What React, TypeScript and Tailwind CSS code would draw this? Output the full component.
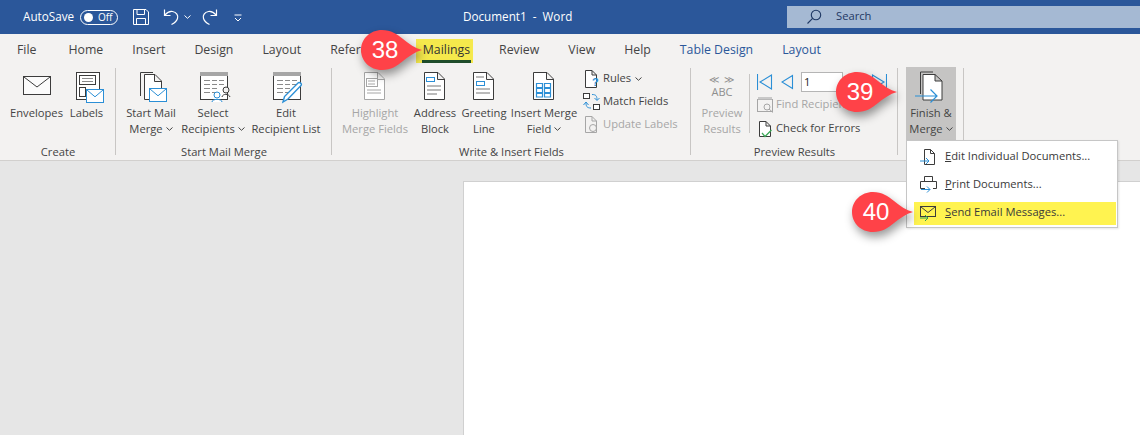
import React from "react";

const ink = "#3c3c3c";
const blue = "#2b8fd6";
const gray = "#a6a6a6";

function Callout({ n, className }: { n: number; className: string }) {
  return (
    <div className={`absolute w-[63px] h-[42px] ${className}`}>
      <svg width="63" height="42" viewBox="0 0 63 42" className="absolute inset-0 drop-shadow-[2px_5px_5px_rgba(0,0,0,0.4)]">
        <path d="M22 1 C31 1 37 5 43 10 C49 15 55 19 62 21 C55 23 49 27 43 32 C37 37 31 41 22 41 C10 41 1 32 1 21 C1 10 10 1 22 1 Z" fill="#ff4248" />
      </svg>
      <span className="absolute left-[3px] top-0 w-[44px] h-[42px] flex items-center justify-center text-white text-[24px] font-['Liberation_Sans',sans-serif]">
        {n}
      </span>
    </div>
  );
}

function Tab({ children, active, blueText, className = "" }: { children: React.ReactNode; active?: boolean; blueText?: boolean; className?: string }) {
  if (active) {
    return (
      <div className="relative h-[24px] flex items-center bg-[#f5e94c] -ml-[7px] pl-[7px] -mr-[3px] pr-[3px] text-[#333333]">
        {children}
        <div className="absolute left-[6px] right-[2px] bottom-0 h-[3px] bg-[#1f4d2b]" />
      </div>
    );
  }
  return <div className={`${blueText ? "text-[#2b579a]" : "text-[#444444]"} ${className}`}>{children}</div>;
}

function BigButton({ w, icon, line1, line2, caret, disabled }: { w: string; icon: React.ReactNode; line1: string; line2?: string; caret?: boolean; disabled?: boolean }) {
  return (
    <div className={`${w} flex flex-col items-center leading-[15px] ${disabled ? "text-[#a6a6a6]" : "text-[#444444]"}`}>
      <div className="h-[38px] pt-[2px]">{icon}</div>
      <div className="whitespace-nowrap">{line1}</div>
      {line2 && (
        <div className="whitespace-nowrap flex items-center mt-px">
          {line2}
          {caret && <Caret />}
        </div>
      )}
    </div>
  );
}

function Caret() {
  return (
    <svg width="7" height="4" viewBox="0 0 7 4" className="ml-[3px] mt-[1px]">
      <path d="M0.5 0.5 L3.5 3.3 L6.5 0.5" fill="none" stroke="#444444" />
    </svg>
  );
}

function Group({ w, label, pl, children }: { w: string; label: string; pl: string; children: React.ReactNode }) {
  return (
    <div className={`${w} ${pl} relative flex flex-col shrink-0`}>
      <div className="flex h-[78px] pt-px">{children}</div>
      <div className="absolute left-0 right-0 top-[78px] text-center leading-[15px] text-[#444444]">{label}</div>
      <div className="absolute right-0 top-[2px] h-[87px] w-px bg-[#c8c6c4]" />
    </div>
  );
}

function Ic({ children, s = 36 }: { children: React.ReactNode; s?: number }) {
  return (
    <svg width={s} height={s} viewBox={`0 0 ${s} ${s}`} fill="none" className="shrink-0">
      {children}
    </svg>
  );
}

function Page({ x, color = ink, y = 3, w = 21, h = 28 }: { x: number; color?: string; y?: number; w?: number; h?: number }) {
  return (
    <path
      d={`M${x + 0.5} ${y + 0.5} H${x + w - 7} L${x + w - 0.5} ${y + 7} V${y + h - 0.5} H${x + 0.5} Z M${x + w - 7.5} ${y + 1} V${y + 7.5} H${x + w - 1}`}
      fill="#ffffff"
      stroke={color}
    />
  );
}

function MiniEnv({ x, y, w = 17, h = 13, color = blue }: { x: number; y: number; w?: number; h?: number; color?: string }) {
  return (
    <g>
      <rect x={x + 0.5} y={y + 0.5} width={w} height={h} fill="#ffffff" stroke={color} />
      <path d={`M${x + 1} ${y + 1} L${x + w / 2 + 0.5} ${y + h * 0.6} L${x + w} ${y + 1}`} stroke={color} />
    </g>
  );
}

function TableIc() {
  return (
    <g>
      <rect x="5.5" y="3.5" width="27" height="27" fill="#ffffff" stroke={ink} />
      <rect x="5" y="3" width="28" height="4" fill="#a6a6a6" />
      <path d="M9 11.5H15M17 11.5H22M24 11.5H29M9 15.5H15M17 15.5H22M24 15.5H29M9 19.5H15M17 19.5H22M9 23.5H15M17 23.5H22" stroke="#8a8a8a" />
    </g>
  );
}

function SmallRow({ icon, text, disabled, caret, className = "" }: { icon: React.ReactNode; text: string; disabled?: boolean; caret?: boolean; className?: string }) {
  return (
    <div className={`h-[23px] flex items-center gap-[1px] whitespace-nowrap ${disabled ? "text-[#a6a6a6]" : "text-[#444444]"} ${className}`}>
      {icon}
      {text}
      {caret && <Caret />}
    </div>
  );
}

function MenuRow({ icon, first, rest, active }: { icon: React.ReactNode; first: string; rest: string; active?: boolean }) {
  return (
    <div className={`h-[23px] flex items-center pl-[6px] mt-[5px] text-[#3a3a3a] ${active ? "bg-[#fff350]" : ""}`}>
      <div className="w-[25px] shrink-0 -mt-[2px]">{icon}</div>
      <span className="pb-[3px]"><span className="underline">{first}</span>{rest}</span>
    </div>
  );
}

export default function App() {
  return (
    <div className="relative w-[1140px] h-[435px] overflow-hidden flex flex-col bg-[#e6e6e6] font-['Open_Sans',sans-serif] text-[11.2px]">
      {/* title bar */}
      <div className="h-[34px] shrink-0 bg-[#2b579a] flex items-center text-white">
        <span className="ml-[23px] w-[50px] text-[11.7px]">AutoSave</span>
        <div className="ml-[7px] w-[38px] h-[15px] rounded-full border border-white flex items-center pl-[3px] gap-[5px]">
          <div className="w-[9px] h-[9px] rounded-full bg-white" />
          <span className="text-[10px] leading-none">Off</span>
        </div>
        <svg width="18" height="18" viewBox="0 0 18 18" fill="none" stroke="#fff" className="ml-[14px]">
          <path d="M1.5 1.5H14L16.5 4V16.5H1.5Z M5 1.5V6.5H12.5V1.5 M4.5 16.5V10.5H13.5V16.5" />
        </svg>
        <svg width="18" height="18" viewBox="0 0 18 18" fill="none" stroke="#fff" strokeWidth="1.2" className="ml-[13px]">
          <path d="M1.5 1.5V7.5H7.5 M1.8 7.2C4 4.5 6.5 3 9.5 3.5C13.5 4.2 15.5 7.5 14.5 10.5C13.8 13 11.5 15 8.5 16.5" />
        </svg>
        <svg width="7" height="4" viewBox="0 0 7 4" fill="none" stroke="#fff" className="ml-[3px]">
          <path d="M0.5 0.5L3.5 3.3L6.5 0.5" />
        </svg>
        <svg width="18" height="18" viewBox="0 0 18 18" fill="none" stroke="#fff" strokeWidth="1.2" className="ml-[9px]">
          <path d="M16.5 1.5V7.5H10.5 M16.2 7.2C14 4.5 11.5 3 8.5 3.5C4.5 4.2 2.5 7.5 3.5 10.5C4.2 13 6.5 15 9.5 16.5" />
        </svg>
        <svg width="8" height="8" viewBox="0 0 8 8" fill="none" stroke="#fff" className="ml-[16px] mt-[1px]">
          <path d="M0.5 1H7.5 M1 4L4 7L7 4" />
        </svg>
        <span className="ml-[221px] text-[11.7px] whitespace-pre">Document1  -  Word</span>
        <div className="ml-auto mb-[1px] w-[353px] h-[22px] bg-[#a5b9d3] flex items-center text-[#1f3864] pl-[19px]">
          <svg width="16" height="16" viewBox="0 0 16 16" fill="none" stroke="#1f3864" strokeWidth="1.1">
            <circle cx="10" cy="6" r="4.7" />
            <path d="M6.6 9.4L1.5 14.5" />
          </svg>
          <span className="ml-[14px]">Search</span>
        </div>
      </div>

      {/* tabs */}
      <div className="h-[32px] shrink-0 bg-[#f3f2f1] flex items-center gap-[29px] pl-[17px] pt-[1px] text-[12.3px]">
        <Tab className="mr-[3px]">File</Tab>
        <Tab>Home</Tab>
        <Tab>Insert</Tab>
        <Tab>Design</Tab>
        <Tab>Layout</Tab>
        <Tab>References</Tab>
        <Tab active>Mailings</Tab>
        <Tab>Review</Tab>
        <Tab>View</Tab>
        <Tab>Help</Tab>
        <Tab blueText>Table Design</Tab>
        <Tab blueText>Layout</Tab>
      </div>

      {/* ribbon */}
      <div className="h-[95px] shrink-0 bg-[#f3f2f1] border-b border-[#d2d0ce] flex">
        <Group w="w-[116px]" pl="pl-[6px]" label="Create">
          <BigButton
            w="w-[61px]"
            line1="Envelopes"
            icon={
              <Ic>
                <rect x="4.5" y="7.5" width="27" height="18" fill="#fbfbfb" stroke={ink} />
                <path d="M5 8L18 18L31 8" stroke={ink} />
              </Ic>
            }
          />
          <BigButton
            w="w-[39px]"
            line1="Labels"
            icon={
              <Ic>
                <rect x="7.5" y="3.5" width="23" height="27" fill="#fff" stroke={ink} />
                <rect x="10.5" y="6.5" width="16" height="9" stroke={ink} />
                <rect x="10.5" y="18.5" width="6" height="9" stroke={ink} />
                <path d="M13 9.5H24M13 12.5H24" stroke="#8a8a8a" />
                <MiniEnv x={17} y={20} />
              </Ic>
            }
          />
        </Group>

        <Group w="w-[216px]" pl="pl-[5px]" label="Start Mail Merge">
          <BigButton
            w="w-[60px]"
            line1="Start Mail"
            line2="Merge"
            caret
            icon={
              <Ic>
                <path d="M7.5 27V3.5H20" stroke={ink} />
                <Page x={11} y={5} w={18} h={26} />
                <MiniEnv x={16} y={19} />
              </Ic>
            }
          />
          <BigButton
            w="w-[64px]"
            line1="Select"
            line2="Recipients"
            caret
            icon={
              <Ic>
                <TableIc />
                <circle cx="22" cy="26" r="3" fill="#fff" stroke={blue} />
                <path d="M17 33C17 29.5 27 29.5 27 33" fill="#fff" stroke={blue} />
                <circle cx="31" cy="21" r="3" fill="#f3f2f1" stroke={ink} />
                <path d="M27 28C27.5 24.5 34 24.5 35 28" stroke={ink} />
              </Ic>
            }
          />
          <BigButton
            w="w-[82px]"
            line1="Edit"
            line2="Recipient List"
            icon={
              <Ic>
                <TableIc />
                <path d="M15 33L16.5 27.5L30 14C31.5 12.5 34.5 15 33 16.5L20 30Z" fill="#fff" stroke={blue} strokeWidth="1.4" />
              </Ic>
            }
          />
        </Group>

        <Group w="w-[359px]" pl="pl-[6px]" label="Write & Insert Fields">
          <BigButton
            w="w-[74px]"
            line1="Highlight"
            line2="Merge Fields"
            disabled
            icon={
              <Ic>
                <Page x={7} color={gray} />
                <rect x="9.5" y="9.5" width="11" height="8" stroke={gray} />
                <path d="M11 12H18M11 15H18M10 21H24M10 24H24" stroke={gray} />
              </Ic>
            }
          />
          <BigButton
            w="w-[46px]"
            line1="Address"
            line2="Block"
            icon={
              <Ic>
                <Page x={7} />
                <rect x="9.5" y="8.5" width="8" height="4" stroke={blue} />
                <path d="M10 17H24M10 21H24M10 25H20" stroke="#777" />
              </Ic>
            }
          />
          <BigButton
            w="w-[52px]"
            line1="Greeting"
            line2="Line"
            icon={
              <Ic>
                <Page x={7} />
                <rect x="10.5" y="12.5" width="8" height="4" stroke={blue} />
                <path d="M10 8H18M10 20H24M10 24H24" stroke="#777" />
              </Ic>
            }
          />
          <BigButton
            w="w-[68px]"
            line1="Insert Merge"
            line2="Field"
            caret
            icon={
              <Ic>
                <Page x={7} />
                <path d="M10.5 14.5H16.5V18.5H10.5Z M18.5 14.5H24.5V18.5H18.5Z M10.5 19.5H16.5V23.5H10.5Z M18.5 19.5H24.5V23.5H18.5Z M10.5 24.5H16.5V28H10.5Z M18.5 24.5H24.5V28H18.5Z" stroke={blue} strokeWidth="1.2" />
              </Ic>
            }
          />
          <div className="ml-[5px] flex flex-col">
            <SmallRow
              text="Rules"
              caret
              icon={
                <Ic s={19}>
                  <path d="M2.5 1.5H9L13.5 6V18.5H2.5Z M9 1.5V6H13.5" stroke={ink} fill="#fff" />
                  <text x="9" y="17" fill={blue} fontSize="11" fontWeight="700" fontFamily="Liberation Sans">?</text>
                </Ic>
              }
            />
            <SmallRow
              text="Match Fields"
              icon={
                <Ic s={19}>
                  <rect x="0.5" y="1.5" width="6" height="5" fill="#fff" stroke={ink} />
                  <rect x="10.5" y="12.5" width="6" height="5" fill="#fff" stroke={ink} />
                  <path d="M9 2.5C13 2.5 14 4 14 8M11.5 6L14 8.5L16.5 6M8 16C3.5 16 3 14 3 10.5M0.5 13L3 10L5.5 13" stroke={blue} />
                </Ic>
              }
            />
            <SmallRow
              disabled
              text="Update Labels"
              icon={
                <Ic s={19}>
                  <path d="M2.5 1.5H9L13.5 6V17.5H2.5Z M9 1.5V6H13.5" stroke={gray} />
                  <circle cx="10" cy="13" r="3.5" stroke={gray} />
                </Ic>
              }
            />
          </div>
        </Group>

        <Group w="w-[207px]" pl="pl-[3px]" label="Preview Results">
          <BigButton
            w="w-[56px]"
            line1="Preview"
            line2="Results"
            disabled
            icon={
              <div className="h-[34px] flex flex-col items-center gap-[2px] text-[#8f8f8f] pt-[5px]">
                <span className="text-[10px] leading-[10px] tracking-[1px]">≪ ≫</span>
                <span className="text-[11px] leading-[12px]">ABC</span>
              </div>
            }
          />
          <div className="w-px h-[59px] mt-[7px] bg-[#c8c6c4] -ml-[1px]" />
          <div className="ml-[7px] pt-[3px] flex flex-col">
            <div className="h-[23px] flex items-center">
              <svg width="16" height="18" viewBox="0 0 16 18" fill="none">
                <path d="M0.5 1V17M14.5 2V16L3 9Z" stroke={blue} strokeWidth="1.1" />
              </svg>
              <svg width="13" height="16" viewBox="0 0 13 16" fill="none" className="ml-[8px]">
                <path d="M11.5 1.5V14.5L1 8Z" stroke={blue} strokeWidth="1.1" />
              </svg>
              <div className="ml-[7px] w-[42px] h-[20px] bg-white border border-[#b5b5b5] pl-[2px] leading-[18px] text-[#222]">1</div>
              <svg width="13" height="16" viewBox="0 0 13 16" fill="none" className="ml-[8px]">
                <path d="M1.5 1.5V14.5L12 8Z" stroke={blue} strokeWidth="1.1" />
              </svg>
              <svg width="16" height="18" viewBox="0 0 16 18" fill="none" className="ml-[7px]">
                <path d="M15.5 1V17M1.5 2V16L13 9Z" stroke={blue} strokeWidth="1.1" />
              </svg>
            </div>
            <SmallRow
              disabled
              text="Find Recipient"
              icon={
                <Ic s={18}>
                  <rect x="0.5" y="3.5" width="15" height="12" stroke={gray} />
                  <path d="M1 3.5H15V1H1Z" fill="#c8c8c8" />
                  <circle cx="10" cy="11" r="3" stroke={gray} />
                  <path d="M12 13L16 16.5" stroke={gray} />
                </Ic>
              }
            />
            <SmallRow
              text="Check for Errors"
              className="mt-px"
              icon={
                <Ic s={18}>
                  <path d="M2.5 1.5H9L13.5 6V16.5H2.5Z M9 1.5V6H13.5" stroke={ink} fill="#fff" />
                  <path d="M5 13L8 16.5L14.5 10" stroke="#3aa655" strokeWidth="1.2" />
                </Ic>
              }
            />
          </div>
        </Group>

        <Group w="w-[66px]" pl="pl-[8px]" label="">
          <div className="w-[50px] h-[74px] bg-[#c5c4c3] shrink-0">
            <BigButton
              w="w-[50px]"
              line1="Finish &"
              line2="Merge"
              caret
              icon={
                <Ic>
                  <path d="M7.5 25V3H20" stroke={ink} />
                  <path d="M10 5.5H22L29 12V31H10Z M22 5.5V12H29" fill="#fff" stroke={ink} />
                  <path d="M2 27H24M17.5 20.5L24 27L17.5 33.5" stroke={blue} strokeWidth="1.2" />
                </Ic>
              }
            />
          </div>
        </Group>
      </div>

      {/* document canvas */}
      <div className="flex-1 pt-[20px] pl-[463px]">
        <div className="h-full bg-white border-l border-t border-[#d0d0d0]" />
      </div>

      {/* finish & merge menu */}
      <div className="absolute left-[906px] top-[140px] w-[212px] h-[88px] bg-white border border-[#c6c6c6] pl-[7px] pr-px shadow-[1px_1px_2px_rgba(0,0,0,0.1)]">
        <MenuRow
          first="E"
          rest="dit Individual Documents..."
          icon={
            <Ic s={18}>
              <path d="M4.5 1.5H10.5L14.5 5.5V16.5H4.5Z M10.5 1.5V5.5H14.5" stroke={ink} fill="#fff" />
              <path d="M0 13H9M6 10L9 13L6 16" stroke={blue} />
            </Ic>
          }
        />
        <MenuRow
          first="P"
          rest="rint Documents..."
          icon={
            <Ic s={18}>
              <path d="M4.5 5V0.5H12.5V5M0.5 5.5H16.5V12.5H13M5 12.5H0.5V5.5" stroke={ink} fill="#fff" />
              <path d="M1 13.5H10M7 10.5L10 13.5L7 16.5" stroke={blue} />
            </Ic>
          }
        />
        <MenuRow
          active
          first="S"
          rest="end Email Messages..."
          icon={
            <Ic s={18}>
              <rect x="0.5" y="2.5" width="15" height="10" stroke={ink} />
              <path d="M1 3L8 8.5L15 3" stroke={ink} />
              <path d="M0 14H8M5 11L8 14L5 17" stroke="#2e9e55" />
            </Ic>
          }
        />
      </div>

      <Callout n={38} className="left-[360px] top-[29px]" />
      <Callout n={39} className="left-[835px] top-[71px]" />
      <Callout n={40} className="left-[851px] top-[191px]" />
    </div>
  );
}
